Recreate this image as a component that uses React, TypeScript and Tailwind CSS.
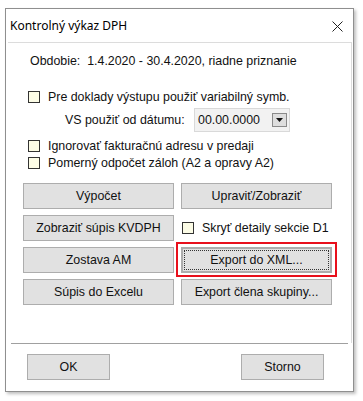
import React from "react";

const body = { fontFamily: '"Liberation Sans", Arial, sans-serif' };

function Check({ label }: { label: string }) {
  return (
    <div className="flex h-4 items-center">
      <span className="h-[12px] w-[12px] border border-[#333] bg-[#fcfce6]" />
      <span className="ml-[8px] text-[12.4px] leading-4 text-[#111]">{label}</span>
    </div>
  );
}

function Btn({ children, className = "" }: { children: React.ReactNode; className?: string }) {
  return (
    <div
      className={
        "flex h-[26px] items-center justify-center border border-[#adadad] bg-[#e1e1e1] text-[12.4px] text-[#111] " +
        className
      }
    >
      {children}
    </div>
  );
}

export default function App() {
  return (
    <div className="h-[401px] w-[363px] overflow-hidden bg-white pl-[5px] pt-[8px]" style={body}>
      <div className="flex h-[384px] w-[349px] flex-col border border-[#8f8f8f] bg-white shadow-[2px_2px_3px_rgba(0,0,0,0.25)]">
        {/* title bar */}
        <div className="flex h-[33px] items-center justify-between pl-[4px] pr-[10px]">
          <span className="text-[12px] text-[#000]" style={{ fontFamily: '"Noto Sans", sans-serif' }}>
            Kontrolný výkaz DPH
          </span>
          <svg width="11" height="11" viewBox="0 0 11 11" className="mt-[2px]">
            <path d="M0.5 0.5 L10.5 10.5 M10.5 0.5 L0.5 10.5" stroke="#222" strokeWidth="1" />
          </svg>
        </div>

        {/* content panel */}
        <div className="ml-[2px] mr-[1px] flex flex-1 flex-col border-r border-t border-[#dcdcdc] pl-[20px] pr-[18px]">
          <div className="mt-[10px] h-4 pl-[2px] text-[12.4px] leading-4 text-[#111]">
            Obdobie:&nbsp; 1.4.2020 - 30.4.2020, riadne priznanie
          </div>

          <div className="mt-[20px]">
            <Check label="Pre doklady výstupu použiť variabilný symb." />
          </div>

          <div className="mt-[3px] flex h-[24px] items-center">
            <span className="ml-[37px] w-[130px] text-[12.4px] text-[#111]">VS použiť od dátumu:</span>
            <div className="ml-[-1px] flex h-[24px] w-[96px] items-center justify-between border border-[#d9d9d9] bg-[#f2f2f2] pl-[3px] pr-[2px]">
              <span className="text-[12.4px] text-[#111]">00.00.0000</span>
              <span className="flex h-[14px] w-[15px] items-center justify-center border border-[#8a8a8a] bg-[#dedede]">
                <svg width="7" height="4" viewBox="0 0 7 4">
                  <path d="M0 0 H7 L3.5 4 Z" fill="#111" />
                </svg>
              </span>
            </div>
          </div>

          <div className="mt-[6px]">
            <Check label="Ignorovať fakturačnú adresu v predaji" />
          </div>
          <div className="mt-[1px]">
            <Check label="Pomerný odpočet záloh (A2 a opravy A2)" />
          </div>

          <div className="ml-[-5px] mt-[12px] grid w-[309px] grid-cols-2 gap-x-[7px] gap-y-[6px]">
            <Btn>Výpočet</Btn>
            <Btn>Upraviť/Zobraziť</Btn>
            <Btn>Zobraziť súpis KVDPH</Btn>
            <div className="flex items-center pl-[1px]">
              <Check label="Skryť detaily sekcie D1" />
            </div>
            <Btn>Zostava AM</Btn>
            <div className="relative">
              <div className="absolute -bottom-[4px] -left-[5px] -right-[5px] -top-[5px] border-2 border-[#e8101c]" />
              <Btn className="border-2 border-[#0078d7]">
                <span className="flex h-[20px] w-[145px] items-center justify-center border border-dotted border-[#333]">
                  Export do XML...
                </span>
              </Btn>
            </div>
            <Btn>Súpis do Excelu</Btn>
            <Btn>Export člena skupiny...</Btn>
          </div>

          <div className="flex-1" />
        </div>
        <div className="mx-[5px] border-t border-[#a0a0a0]" />
        <div className="flex h-[47px] items-start justify-between pl-[21px] pr-[29px] pt-[10px]">
          <Btn className="w-[83px]">OK</Btn>
          <Btn className="w-[83px]">Storno</Btn>
        </div>
      </div>
    </div>
  );
}
